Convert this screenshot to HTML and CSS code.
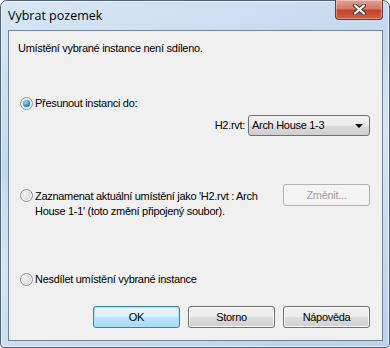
FILE: index.html
```html
<!DOCTYPE html>
<html lang="cs">
<head>
    <meta charset="UTF-8">
    <title>Vybrat pozemek</title>
    <link rel="stylesheet" href="styles.css">
</head>
<body>

<div class="window">
    <!-- Title bar -->
    <div class="titlebar">
        <span class="title">Vybrat pozemek</span>
        <div class="close-btn">
            <svg width="17" height="11" viewBox="0 0 17 11">
                <path d="M4 1.5 L13 9.5 M13 1.5 L4 9.5" stroke="#3b3b3b" stroke-width="4.2" stroke-linecap="round"/>
                <path d="M4 1.5 L13 9.5 M13 1.5 L4 9.5" stroke="#ffffff" stroke-width="2.2" stroke-linecap="round"/>
            </svg>
        </div>
    </div>

    <!-- Client area -->
    <div class="client">
        <p class="message">Umístění vybrané instance není sdíleno.</p>

        <div class="option option-move">
            <span class="radio checked"></span>
            <span class="label">Přesunout instanci do:</span>
        </div>

        <div class="target">
            <span class="target-label">H2.rvt:</span>
            <div class="combo">
                <span class="combo-text">Arch House 1-3</span>
                <span class="combo-arrow"></span>
            </div>
        </div>

        <div class="option option-record">
            <span class="radio"></span>
            <span class="label label-wrap">Zaznamenat aktuální umístění jako 'H2.rvt : Arch House 1-1' (toto změní připojený soubor).</span>
            <button class="btn disabled">Změnit...</button>
        </div>

        <div class="option option-keep">
            <span class="radio"></span>
            <span class="label">Nesdílet umístění vybrané instance</span>
        </div>

        <div class="buttons">
            <button class="btn default">OK</button>
            <button class="btn">Storno</button>
            <button class="btn">Nápověda</button>
        </div>
    </div>
</div>

</body>
</html>
```

FILE: styles.css
```css
body {
    margin: 0;
    padding: 0;
    background-color: #ffffff;
    font-family: "Liberation Sans", Arial, sans-serif;
    font-size: 11px;
    letter-spacing: -0.3px;
    color: #000000;
}

/* Window frame */
.window {
    width: 390px;
    height: 348px;
    box-sizing: border-box;
    border: 1px solid #4f6378;
    border-radius: 7px 7px 4px 4px;
    background-image: linear-gradient(160deg, #d9e7f5 0%, #c3d8ef 35%, #d6e5f4 55%, #bad1ea 100%);
    box-shadow: inset 0 0 0 1px rgba(255, 255, 255, 0.6);
    display: flex;
    flex-direction: column;
}

.titlebar {
    height: 29px;
    display: flex;
    align-items: flex-start;
    padding-left: 7px;
}

.title {
    font-family: "Open Sans", "Noto Sans", sans-serif;
    font-size: 12.5px;
    letter-spacing: 0;
    line-height: 16px;
    margin-top: 7px;
    color: #000000;
}

.close-btn {
    margin-left: auto;
    margin-right: 6px;
    margin-top: -1px;
    width: 46px;
    height: 19px;
    border: 1px solid #6b3a33;
    border-top: none;
    border-radius: 0 0 4px 4px;
    background-image: linear-gradient(#e4a194 0%, #d47865 45%, #c0452b 55%, #cc6148 100%);
    box-shadow: inset 0 0 0 1px rgba(255, 255, 255, 0.35);
    display: flex;
    justify-content: center;
    align-items: center;
}

/* Client area */
.client {
    margin: 0 6px 0 7px;
    height: 311px;
    box-sizing: border-box;
    border: 1px solid #6f8499;
    background-color: #f0f0f0;
    padding: 10px 12px 0 11px;
    display: flex;
    flex-direction: column;
}

.message {
    margin: 0 0 0 -2px;
    line-height: 15px;
}

.option {
    display: flex;
    align-items: flex-start;
}

.option-move {
    margin-top: 40px;
}

.option-record {
    margin-top: 48px;
}

.option-keep {
    margin-top: 53px;
}

.label {
    line-height: 15px;
    margin-left: 2px;
}

.option-record .radio,
.option-record .label {
    margin-top: 5px;
}

.label-wrap {
    width: 240px;
}

/* Radio buttons */
.radio {
    width: 11px;
    height: 11px;
    margin-top: 1px;
    border: 1px solid #8e8f8f;
    border-radius: 50%;
    background-image: radial-gradient(circle at 40% 40%, #f4f4f4 0%, #d7d7d7 70%, #c6c6c6 100%);
    box-shadow: inset 0 0 0 1px #f6f6f6;
    position: relative;
    flex-shrink: 0;
}

.radio.checked::after {
    content: "";
    position: absolute;
    left: 2px;
    top: 2px;
    width: 7px;
    height: 7px;
    border-radius: 50%;
    background-image: radial-gradient(circle at 40% 35%, #9fe0fb 0%, #2a8cc8 55%, #0d4f86 100%);
}

/* Combo box */
.target {
    margin-top: 4px;
    display: flex;
    justify-content: flex-end;
    align-items: center;
    gap: 3px;
}

.target-label {
    line-height: 15px;
}

.combo {
    width: 117px;
    height: 19px;
    border: 1px solid #707070;
    border-radius: 3px;
    background-image: linear-gradient(#f2f2f2 0%, #ebebeb 50%, #dddddd 50%, #cfcfcf 100%);
    display: flex;
    align-items: center;
    padding-left: 3px;
}

.combo-text {
    line-height: 15px;
}

.combo-arrow {
    margin-left: auto;
    margin-right: 6px;
    width: 0;
    height: 0;
    border-left: 4px solid transparent;
    border-right: 4px solid transparent;
    border-top: 4px solid #000000;
}

/* Push buttons */
.btn {
    width: 87px;
    height: 22px;
    margin: 0;
    padding: 0;
    font-family: inherit;
    font-size: 11px;
    letter-spacing: inherit;
    color: #000000;
    border: 1px solid #707070;
    border-radius: 3px;
    background-image: linear-gradient(#f2f2f2 0%, #ebebeb 50%, #dddddd 50%, #cfcfcf 100%);
    box-shadow: inset 0 0 0 1px #fcfcfc;
}

.btn.default {
    border-color: #3c7fb1;
    background-image: linear-gradient(#eaf6fd 0%, #d9f0fc 50%, #bee6fd 50%, #a7d9f5 100%);
    box-shadow: inset 0 0 0 1px #a6e4fd;
}

.btn.disabled {
    margin-left: auto;
    color: #a0a0a0;
    border-color: #adb2b5;
    background-image: none;
    background-color: #f4f4f4;
    box-shadow: none;
}

.buttons {
    margin-top: 19px;
    display: flex;
    justify-content: flex-end;
    gap: 8px;
}
```
